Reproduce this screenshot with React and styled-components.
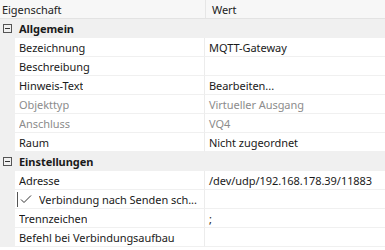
import React from "react";
import styled, { createGlobalStyle } from "styled-components";

const Global = createGlobalStyle`
  html, body { margin: 0; padding: 0; background: #ffffff; }
  body { font-family: "Noto Sans", "Open Sans", sans-serif; font-size: 11px; letter-spacing: -0.05px; color: #1a1a1a; }
`;

const Grid = styled.div`
  width: 385px;
  height: 250px;
  overflow: hidden;
  background: #ffffff;
  display: flex;
  flex-direction: column;
`;

const Header = styled.div`
  display: grid;
  grid-template-columns: 206px 1fr;
  height: 19px;
  background: #f7f7f7;
  border-bottom: 1px solid #e3e3e3;
  box-sizing: border-box;
`;

const HeaderCell = styled.div`
  display: flex;
  align-items: center;
  padding-left: ${(p) => p.$pad}px;
  border-right: ${(p) => (p.$divider ? "1px solid #e6e6e6" : "none")};
  color: #222;
  white-space: nowrap;
`;

const Category = styled.div`
  display: flex;
  align-items: center;
  height: 19px;
  background: #f0f0f0;
  box-sizing: border-box;
  font-weight: 700;
  color: #1a1a1a;
`;

const Toggle = styled.span`
  width: 9px;
  height: 9px;
  box-sizing: border-box;
  border: 1px solid #555;
  margin: 0 7px 0 3px;
  position: relative;
  flex: none;
  &::after {
    content: "";
    position: absolute;
    left: 1px;
    right: 1px;
    top: 3px;
    height: 1px;
    background: #333;
  }
`;

const Row = styled.div`
  display: grid;
  grid-template-columns: 15px 190px 1fr;
  height: 19px;
`;

const Gutter = styled.div`
  background: #f0f0f0;
`;

const Label = styled.div`
  display: flex;
  align-items: center;
  gap: 6px;
  padding-left: 4px;
  border-bottom: 1px solid #f0f0f0;
  border-right: 1px solid #ececec;
  color: ${(p) => (p.$disabled ? "#8c8c8c" : "#1a1a1a")};
  white-space: nowrap;
  overflow: hidden;
  min-width: 0;
`;

const LabelText = styled.span`
  overflow: hidden;
  min-width: 0;
`;

const Value = styled.div`
  display: flex;
  align-items: center;
  padding-left: 4px;
  border-bottom: 1px solid #f0f0f0;
  color: ${(p) => (p.$disabled ? "#8c8c8c" : "#1a1a1a")};
  white-space: nowrap;
  overflow: hidden;
`;

const CheckBox = styled.svg`
  flex: none;
  margin-left: -2px;
`;

const Check = () => (
  <CheckBox width="16" height="15" viewBox="0 0 16 15">
    <line x1="0.5" y1="0" x2="0.5" y2="15" stroke="#555" strokeWidth="1" />
    <polyline points="4,7.5 7,10.5 14,3.5" fill="none" stroke="#333" strokeWidth="1" />
  </CheckBox>
);

const sections = [
  {
    title: "Allgemein",
    rows: [
      { label: "Bezeichnung", value: "MQTT-Gateway" },
      { label: "Beschreibung", value: "" },
      { label: "Hinweis-Text", value: "Bearbeiten..." },
      { label: "Objekttyp", value: "Virtueller Ausgang", disabled: true },
      { label: "Anschluss", value: "VQ4", disabled: true },
      { label: "Raum", value: "Nicht zugeordnet" },
    ],
  },
  {
    title: "Einstellungen",
    rows: [
      { label: "Adresse", value: "/dev/udp/192.168.178.39/11883" },
      { label: "Verbindung nach Senden sch...", value: "", check: true },
      { label: "Trennzeichen", value: ";" },
      { label: "Befehl bei Verbindungsaufbau", value: "" },
    ],
  },
];

export default function App() {
  return (
    <>
      <Global />
      <Grid>
        <Header>
          <HeaderCell $pad={2} $divider>Eigenschaft</HeaderCell>
          <HeaderCell $pad={6}>Wert</HeaderCell>
        </Header>
        {sections.map((s) => (
          <React.Fragment key={s.title}>
            <Category>
              <Toggle />
              {s.title}
            </Category>
            {s.rows.map((r) => (
              <Row key={r.label}>
                <Gutter />
                <Label $disabled={r.disabled}>
                  {r.check && <Check />}
                  <LabelText>{r.label}</LabelText>
                </Label>
                <Value $disabled={r.disabled}>{r.value}</Value>
              </Row>
            ))}
          </React.Fragment>
        ))}
      </Grid>
    </>
  );
}
